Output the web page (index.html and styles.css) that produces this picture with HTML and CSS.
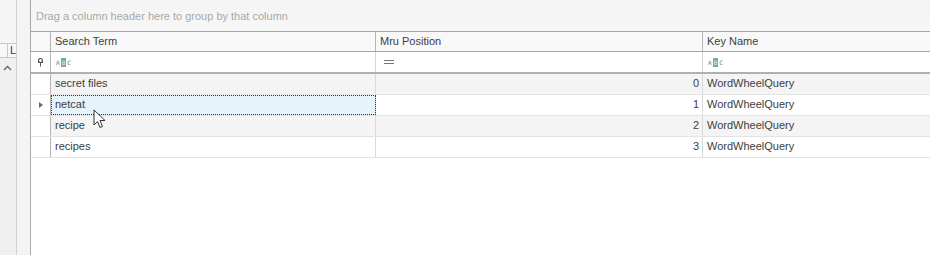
FILE: index.html
```html
<!DOCTYPE html>
<html>
<head>
<meta charset="utf-8">
<link rel="stylesheet" href="styles.css">
</head>
<body>
<div class="app">
  <div class="side">
    <div class="side-top"></div>
    <div class="side-tab"><span class="tab-left"></span><span class="tab-l">L</span></div>
    <div class="side-chev"><svg width="9" height="6" viewBox="0 0 9 6"><path d="M1 5 L4.5 1.5 L8 5" fill="none" stroke="#606060" stroke-width="1.3"/></svg></div>
  </div>
  <div class="gutter"></div>
  <div class="grid">
    <div class="group-panel">Drag a column header here to group by that column</div>
    <div class="table">
      <div class="row header">
        <div class="ind"></div>
        <div class="cell c1">Search Term</div>
        <div class="cell c2">Mru Position</div>
        <div class="cell c3">Key Name</div>
      </div>
      <div class="row filter">
        <div class="ind"><svg width="7" height="9" viewBox="0 0 7 9"><circle cx="3.5" cy="2.5" r="2" fill="none" stroke="#555" stroke-width="1.2"/><path d="M1 4.5 H6" stroke="#555" stroke-width="1"/><path d="M3.5 4.5 V8.5" stroke="#555" stroke-width="1"/></svg></div>
        <div class="cell c1"><span class="abc"><span class="abc-a">A</span><span class="abc-b">B</span><span class="abc-c">C</span></span></div>
        <div class="cell c2"><span class="eq"></span></div>
        <div class="cell c3"><span class="abc"><span class="abc-a">A</span><span class="abc-b">B</span><span class="abc-c">C</span></span></div>
      </div>
      <div class="row data alt">
        <div class="ind"></div>
        <div class="cell c1">secret files</div>
        <div class="cell c2 num">0</div>
        <div class="cell c3">WordWheelQuery</div>
      </div>
      <div class="row data">
        <div class="ind"><span class="tri"></span></div>
        <div class="cell c1 focused">netcat</div>
        <div class="cell c2 num">1</div>
        <div class="cell c3">WordWheelQuery</div>
      </div>
      <div class="row data alt">
        <div class="ind"></div>
        <div class="cell c1">recipe</div>
        <div class="cell c2 num">2</div>
        <div class="cell c3">WordWheelQuery</div>
      </div>
      <div class="row data">
        <div class="ind"></div>
        <div class="cell c1">recipes</div>
        <div class="cell c2 num">3</div>
        <div class="cell c3">WordWheelQuery</div>
      </div>
    </div>
    <svg class="cursor" width="14" height="21" viewBox="0 0 14 21"><path d="M1 1 L1 16 L4.5 12.5 L7 18.5 L9.5 17.5 L7 11.5 L12 11.5 Z" fill="#ffffff" stroke="#333" stroke-width="1" stroke-linejoin="round"/></svg>
  </div>
</div>
</body>
</html>
```

FILE: styles.css
```css
* { box-sizing: border-box; }
html, body { margin: 0; padding: 0; }
body {
  width: 930px;
  height: 255px;
  overflow: hidden;
  background: #ffffff;
  font-family: "Liberation Sans", sans-serif;
  font-size: 11px;
  color: #3c3c3c;
}
.app {
  display: flex;
  height: 255px;
}
.side {
  width: 17px;
  background: #f0f0f0;
  border-right: 1px solid #d2d2d2;
  display: flex;
  flex-direction: column;
}
.side-top {
  height: 43px;
  background: #f5f5f5;
}
.side-tab {
  height: 15px;
  border-top: 1px solid #c8c8c8;
  border-bottom: 1px solid #c8c8c8;
  background: #f7f7f7;
  display: flex;
}
.tab-left {
  width: 8px;
  border-right: 1px solid #c8c8c8;
}
.tab-l {
  font-size: 11px;
  line-height: 13px;
  color: #404040;
  padding-left: 2px;
}
.side-chev {
  height: 20px;
  display: flex;
  align-items: center;
  justify-content: center;
  padding-right: 2px;
}
.gutter {
  width: 14px;
  background: #f4f4f4;
  border-right: 1px solid #a9a9a9;
}
.grid {
  flex: 1;
  position: relative;
  display: flex;
  flex-direction: column;
}
.group-panel {
  height: 31px;
  background: linear-gradient(#f4f4f4, #f7f7f7);
  color: #a8a8a8;
  padding-left: 5px;
  padding-top: 1px;
  line-height: 31px;
}
.table {
  border-top: 1px solid #a6a6a6;
}
.row {
  display: grid;
  grid-template-columns: 20px 325px 327px 1fr;
}
.cell, .ind {
  display: flex;
  align-items: center;
  white-space: nowrap;
  overflow: hidden;
}
.header {
  height: 20px;
  background: #f8f8f8;
  border-bottom: 1px solid #a6a6a6;
}
.header .ind, .header .cell {
  border-right: 1px solid #b4b4b4;
  padding-left: 4px;
  padding-bottom: 2px;
  color: #404040;
}
.header .c3 { border-right: none; }
.filter {
  height: 22px;
  background: #ffffff;
  border-bottom: 2px solid #b0b0b0;
}
.filter .ind {
  border-right: 1px solid #b4b4b4;
  justify-content: center;
}
.filter .cell {
  border-right: 1px solid #d6d6d6;
  padding-left: 4px;
}
.filter .c3 { border-right: none; }
.abc {
  display: inline-flex;
  align-items: center;
  font-family: "DejaVu Sans Mono", monospace;
  font-size: 6px;
  line-height: 7px;
  color: #4e7f76;
}
.abc-a, .abc-c { padding: 0 1px; }
.abc-b {
  background: #7aa89c;
  color: #e6f0ec;
  padding: 0 1px;
  height: 9px;
  line-height: 9px;
}
.eq {
  display: block;
  width: 10px;
  height: 4px;
  margin-left: 4px;
  border-top: 1px solid #777;
  border-bottom: 1px solid #777;
}
.data {
  height: 21px;
  background: #ffffff;
  border-bottom: 1px solid #e3e3e3;
}
.data.alt { background: #f4f4f4; }
.data .ind {
  background: #ffffff;
  border-right: 1px solid #b4b4b4;
  justify-content: center;
}
.data .cell {
  border-right: 1px solid #dadada;
  padding-left: 4px;
  padding-bottom: 3px;
  color: #404040;
}
.data .num {
  justify-content: flex-end;
  padding-right: 3px;
}
.data .c3 { border-right: none; }
.data .c1.focused {
  background: #e6f3fb;
  outline: 1px dotted #333;
  outline-offset: -1px;
}
.tri {
  width: 0;
  height: 0;
  border-top: 3.5px solid transparent;
  border-bottom: 3.5px solid transparent;
  border-left: 4px solid #6a6a6a;
}
.cursor {
  position: absolute;
  left: 62px;
  top: 109px;
}
```
